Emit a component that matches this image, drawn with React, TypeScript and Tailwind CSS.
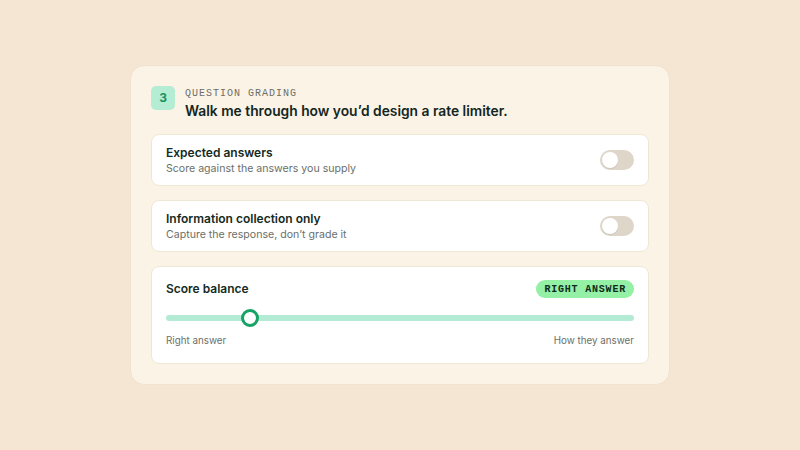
import React from "react";

function Toggle() {
  return (
    <div className="w-[34px] h-[20px] rounded-full bg-[#ddd6c9] p-[2px] flex items-center">
      <div className="w-[16px] h-[16px] rounded-full bg-white shadow-[0_1px_1px_rgba(0,0,0,0.08)]" />
    </div>
  );
}

function Row({ title, sub }: { title: string; sub: string }) {
  return (
    <div className="h-[52px] rounded-[8px] bg-white border border-[#f0e6d6] px-[14px] flex items-center justify-between">
      <div className="flex flex-col">
        <div className="text-[12px] leading-[16px] font-semibold text-[#142a22]">{title}</div>
        <div className="text-[10.6px] leading-[15px] text-[#6b6f68]">{sub}</div>
      </div>
      <Toggle />
    </div>
  );
}

export default function App() {
  return (
    <div
      className="w-[800px] h-[450px] bg-[#f4e6d3] flex items-center justify-center"
      style={{ fontFamily: "Inter, 'Noto Sans', sans-serif" }}
    >
      <div className="w-[540px] h-[320px] rounded-[14px] bg-[#faf3e6] border border-[#efe2cf] px-[20px] pt-[20px] flex flex-col">
        <div className="flex gap-[10px] items-start">
          <div className="w-[24px] h-[24px] rounded-[5px] bg-[#b4ecd4] flex items-center justify-center text-[12px] font-bold text-[#18935f]">
            3
          </div>
          <div className="flex flex-col pt-[2px]">
            <div
              className="text-[10px] leading-[12px] tracking-[1px] text-[#6e6e66]"
              style={{ fontFamily: "'Liberation Mono', monospace" }}
            >
              QUESTION GRADING
            </div>
            <div className="mt-[2px] text-[13.8px] leading-[18px] font-semibold text-[#13261e]">
              Walk me through how you’d design a rate limiter.
            </div>
          </div>
        </div>
        <div className="mt-[14px] flex flex-col gap-[14px]">
          <Row title="Expected answers" sub="Score against the answers you supply" />
          <Row title="Information collection only" sub="Capture the response, don’t grade it" />
          <div className="h-[98px] rounded-[8px] bg-white border border-[#f0e6d6] px-[14px] pt-[13px] flex flex-col">
            <div className="flex items-center justify-between">
              <div className="text-[12px] leading-[18px] font-semibold text-[#142a22]">Score balance</div>
              <div
                className="h-[18px] px-[8px] rounded-full bg-[#93f0a4] flex items-center text-[10px] font-bold tracking-[0.8px] text-[#0f2a1c]"
                style={{ fontFamily: "'Liberation Mono', monospace" }}
              >
                RIGHT ANSWER
              </div>
            </div>
            <div className="relative mt-[11px] h-[18px] flex items-center">
              <div className="w-full h-[6px] rounded-full bg-[#b3ebd5]" />
              <div className="absolute left-[75px] top-0 w-[18px] h-[18px] rounded-full bg-white border-[3px] border-[#17a266]" />
            </div>
            <div className="mt-[7px] flex justify-between text-[9.8px] leading-[14px] text-[#6b6f68]">
              <span>Right answer</span>
              <span>How they answer</span>
            </div>
          </div>
        </div>
      </div>
    </div>
  );
}
